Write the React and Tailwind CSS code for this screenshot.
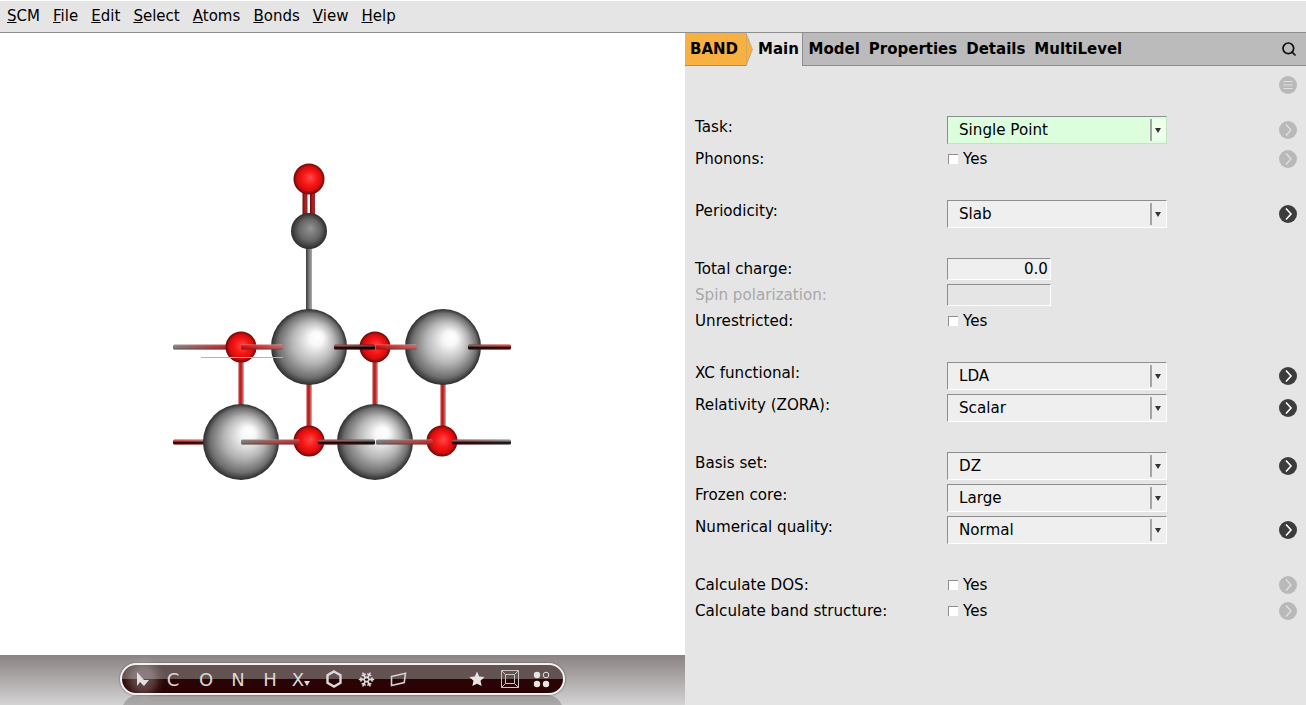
import { Search, Snowflake } from 'lucide-react';

const menus = ['SCM', 'File', 'Edit', 'Select', 'Atoms', 'Bonds', 'View', 'Help'];
const tabs = ['Model', 'Properties', 'Details', 'MultiLevel'];

function MoreBtn({ dark, menu }) {
  return (
    <div className={`w-[18px] h-[18px] rounded-full flex items-center justify-center ${dark ? 'bg-[#3c3c3c]' : 'bg-[#b9b9b9]'}`}>
      <svg width="18" height="18" viewBox="0 0 18 18" fill="none" stroke={dark ? '#fff' : '#e2e2e2'} strokeWidth={dark ? 1.6 : 1.2}>
        {menu ? <path d="M4.5 5.5h9M4.5 9h9M4.5 12.5h9" /> : <path d="M7 3.5 12 9l-5 5.5" />}
      </svg>
    </div>
  );
}

function Row({ label, disabled, tall, more, children }) {
  return (
    <div className={`flex items-center text-[15.15px] ${tall ? 'h-8' : 'h-[26px]'}`}>
      <div className={`w-[262px] pl-[10px] ${tall ? 'pb-[5px]' : ''} ${disabled ? 'text-[#a8a8a8]' : ''}`}>{label}</div>
      <div className="flex-1">{children}</div>
      <div className="w-[18px] mr-[9px]">{more && <MoreBtn dark={more === 'dark'} />}</div>
    </div>
  );
}

function Select({ value, green }) {
  return (
    <div className={`w-[220px] h-7 flex items-center border-t border-l border-[#8e8e8e] border-b border-r ${green ? 'bg-[#dcfedc] border-b-[#c2e4c2] border-r-[#c2e4c2]' : 'bg-[#efefef] border-b-white border-r-white'}`}>
      <div className="flex-1 pl-[11px] pt-[1px]">{value}</div>
      <div className={`w-4 h-[22px] flex items-center justify-center pr-[3px] border-l-2 border-[#a4a4a4] ${green ? 'bg-[#eeffee]' : ''}`}>
        <div className="w-0 h-0 border-l-[3.5px] border-r-[3.5px] border-t-[5px] border-l-transparent border-r-transparent border-t-[#333] mt-[1px]" />
      </div>
    </div>
  );
}

function Check() {
  return (
    <div className="flex items-center gap-[5px] pl-[1px]">
      <div className="w-[10px] h-[10px] bg-white border-t border-l border-[#8e8e8e]" />
      <span>Yes</span>
    </div>
  );
}

function Input({ value, muted }) {
  return (
    <div className={`w-[104px] h-[22px] border-t border-l border-[#8e8e8e] border-b border-r border-b-white border-r-white text-right pr-[2px] leading-[20px] ${muted ? '' : 'bg-[#efefef]'}`}>
      {value}
    </div>
  );
}

function HBond({ x1, x2, y, from, to, id, dark }) {
  return (
    <g>
      <defs>
        <linearGradient id={id} x1="0" x2="1" y1="0" y2="0">
          <stop offset="0" stopColor={from} />
          <stop offset="1" stopColor={to} />
        </linearGradient>
      </defs>
      <rect x={x1} y={y - 2.5} width={x2 - x1} height={5} rx="1.5" fill={`url(#${id})`} />
      <rect x={x1} y={y - 2.5} width={x2 - x1} height={5} rx="1.5" fill={dark ? 'url(#bondShadeDark)' : 'url(#bondShade)'} />
    </g>
  );
}

function VBond({ x, y1, y2, color = 'red', w = 6 }) {
  return <rect x={x - w / 2} y={y1} width={w} height={y2 - y1} fill={color === 'red' ? 'url(#vRed)' : color === 'grey' ? 'url(#vGrey)' : 'url(#vDeep)'} />;
}

function Molecule() {
  const grey = [[309, 347], [443, 347], [241, 442], [375, 442]];
  const red = [[241, 347], [375, 347], [309, 441], [442, 441]];
  return (
    <svg width="685" height="622" viewBox="0 33 685 622" className="block">
      <defs>
        <radialGradient id="sGrey" cx="0.5" cy="0.5" r="0.5" fx="0.62" fy="0.36">
          <stop offset="0" stopColor="#fff" />
          <stop offset="0.18" stopColor="#f8f8f8" />
          <stop offset="0.55" stopColor="#b6b6b6" />
          <stop offset="0.85" stopColor="#6e6e6e" />
          <stop offset="1" stopColor="#2c2c2c" />
        </radialGradient>
        <radialGradient id="sRed" cx="0.5" cy="0.5" r="0.5" fx="0.55" fy="0.45">
          <stop offset="0" stopColor="#ff4a4a" />
          <stop offset="0.5" stopColor="#f71414" />
          <stop offset="0.78" stopColor="#d40e0e" />
          <stop offset="1" stopColor="#6a0808" />
        </radialGradient>
        <radialGradient id="sDark" cx="0.5" cy="0.5" r="0.5" fx="0.55" fy="0.42">
          <stop offset="0" stopColor="#949494" />
          <stop offset="0.6" stopColor="#666" />
          <stop offset="1" stopColor="#2c2c2c" />
        </radialGradient>
        <linearGradient id="bondShade" x1="0" x2="0" y1="0" y2="1">
          <stop offset="0" stopColor="#fff" stopOpacity="0.35" />
          <stop offset="0.5" stopColor="#000" stopOpacity="0" />
          <stop offset="1" stopColor="#000" stopOpacity="0.35" />
        </linearGradient>
        <linearGradient id="bondShadeDark" x1="0" x2="0" y1="0" y2="1">
          <stop offset="0" stopColor="#fff" stopOpacity="0.1" />
          <stop offset="0.55" stopColor="#000" stopOpacity="0.85" />
          <stop offset="1" stopColor="#000" stopOpacity="0.6" />
        </linearGradient>
        <linearGradient id="vRed" x1="0" x2="1" y1="0" y2="0">
          <stop offset="0" stopColor="#eec0c0" />
          <stop offset="0.3" stopColor="#b01818" />
          <stop offset="0.65" stopColor="#c83030" />
          <stop offset="1" stopColor="#e8b0b0" />
        </linearGradient>
        <linearGradient id="vGrey" x1="0" x2="1" y1="0" y2="0">
          <stop offset="0" stopColor="#3a3a3a" />
          <stop offset="0.5" stopColor="#777" />
          <stop offset="1" stopColor="#aaa" />
        </linearGradient>
        <linearGradient id="vDeep" x1="0" x2="1" y1="0" y2="0">
          <stop offset="0" stopColor="#6a0a0a" />
          <stop offset="0.5" stopColor="#b02020" />
          <stop offset="1" stopColor="#8a3030" />
        </linearGradient>
      </defs>

      <VBond x={309} y1={240} y2={312} color="grey" />
      <VBond x={305} y1={190} y2={216} color="deep" w={5} />
      <VBond x={312.5} y1={190} y2={216} color="deep" w={5} />
      <circle cx="309" cy="179" r="15.5" fill="url(#sRed)" />
      <circle cx="309" cy="231" r="18" fill="url(#sDark)" />

      <VBond x={241} y1={350} y2={408} />
      <VBond x={375} y1={350} y2={408} />
      <VBond x={309} y1={380} y2={432} />
      <VBond x={443} y1={380} y2={432} />

      <HBond id="h1" x1={173} x2={230} y={347} from="#888" to="#c82828" />
      <HBond id="h5" x1={173} x2={216} y={442} from="#ff1010" to="#d06060" dark />
      {grey.map(([cx, cy]) => <circle key={cx} cx={cx} cy={cy} r="38" fill="url(#sGrey)" />)}
      {red.map(([cx, cy]) => <circle key={cx} cx={cx} cy={cy} r="15.5" fill="url(#sRed)" />)}

      <HBond id="h2" x1={241} x2={283} y={347} from="#d81010" to="#c87070" />
      <HBond id="h3" x1={334} x2={375} y={347} from="#a03030" to="#500000" dark />
      <HBond id="h4" x1={376} x2={417} y={347} from="#d81010" to="#c87070" />
      <HBond id="h6" x1={468} x2={511} y={347} from="#603030" to="#ff1010" dark />
      <HBond id="h7" x1={241} x2={300} y={442} from="#808080" to="#c83030" />
      <HBond id="h8" x1={318} x2={375} y={442} from="#b02020" to="#505050" dark />
      <HBond id="h9" x1={376} x2={433} y={442} from="#808080" to="#c83030" />
      <HBond id="h10" x1={452} x2={511} y={442} from="#a02020" to="#808080" dark />
      <line x1="201" x2="283" y1="357.5" y2="357.5" stroke="#5cf05c" strokeWidth="1" />
    </svg>
  );
}

function ToolIcon({ w, children }) {
  return <div style={{ width: w }} className="flex items-center justify-center h-full">{children}</div>;
}

function Toolbar() {
  const letters = [['C', 30], ['O', 36], ['N', 28], ['H', 36]];
  return (
    <div className="h-[50px] bg-gradient-to-b from-[#8b8383] to-[#d4d4d4] flex justify-center relative overflow-hidden">
      <div className="absolute top-[40px] left-[122px] w-[441px] h-5 rounded-t-[16px] bg-gradient-to-b from-[#a09c9c] to-[#b6b6b6]" />
      <div className="relative mt-2 w-[445px] h-[32px] rounded-full border-2 border-[#f2f0f0] bg-gradient-to-b from-[#635252] from-50% to-[#2a0404] to-50% flex items-center pl-[6px] pr-[7px] text-[#dcd8d8] text-[18px] font-['DejaVu_Sans',sans-serif] shadow-[0_0_2px_#444]">
        <ToolIcon w={30}>
          <div className="relative">
            <div className="absolute -inset-[8px] rounded-full bg-white/25 blur-[4px]" />
            <svg width="14" height="16" viewBox="0 0 14 16" className="relative"><path d="M1 1v14l3-4 4 4 5-6H8z" fill="#e4e0e0" /></svg>
          </div>
        </ToolIcon>
        {letters.map(([l, w]) => <ToolIcon key={l} w={w}>{l}</ToolIcon>)}
        <ToolIcon w={30}>
          <span>X</span>
          <div className="w-0 h-0 border-l-[3.5px] border-r-[3.5px] border-t-[5px] border-l-transparent border-r-transparent border-t-[#dcd8d8] mt-2 mr-[4px]" />
        </ToolIcon>
        <ToolIcon w={32}>
          <svg width="16" height="18" viewBox="0 0 16 18" fill="none" stroke="#dcd8d8" strokeWidth="2.4"><path d="M8 1.5 14.5 5.2v7.6L8 16.5 1.5 12.8V5.2z" /></svg>
        </ToolIcon>
        <ToolIcon w={32}><Snowflake size={17} strokeWidth={2.2} /></ToolIcon>
        <ToolIcon w={32}>
          <svg width="17" height="15" viewBox="0 0 17 15" fill="none" stroke="#d4d0d0" strokeWidth="1.6"><path d="M1.5 4.5 15.5 1.2 14.2 10.5 1.5 13.5z" /></svg>
        </ToolIcon>
        <div className="flex-1" />
        <ToolIcon w={32}>
          <svg width="16" height="16" viewBox="0 0 16 16"><path d="M8 .5l2.2 5.1 5.4.5-4.1 3.6 1.2 5.4L8 12.8l-4.7 2.3 1.2-5.4L.4 6.1l5.4-.5z" fill="#e8e4e4" /></svg>
        </ToolIcon>
        <ToolIcon w={33}>
          <svg width="18" height="18" viewBox="0 0 18 18" fill="none" stroke="#c8c4c4" strokeWidth="1"><path d="M.5.5h17v17H.5zM4.5 4.5h9v9h-9zM.5.5l4 4M17.5.5l-4 4M.5 17.5l4-4M17.5 17.5l-4-4" /></svg>
        </ToolIcon>
        <ToolIcon w={30}>
          <svg width="17" height="17" viewBox="0 0 17 17">
            <circle cx="4" cy="4" r="3.2" fill="#e8e4e4" />
            <circle cx="13" cy="4" r="2.8" fill="none" stroke="#e8e4e4" />
            <circle cx="4" cy="13" r="3.2" fill="#e8e4e4" />
            <circle cx="13" cy="13" r="3.2" fill="#e8e4e4" />
          </svg>
        </ToolIcon>
      </div>
    </div>
  );
}

export default function App() {
  return (
    <div className="h-screen w-full overflow-hidden flex flex-col bg-white text-[15px] text-black font-['DejaVu_Sans',sans-serif]">
      <div className="h-[33px] shrink-0 bg-[#e5e5e5] border-t border-white border-b border-b-[#8e8e8e] flex items-center pl-[7px] gap-[13.1px]">
        {menus.map((m) => (
          <span key={m}><span className="underline">{m[0]}</span>{m.slice(1)}</span>
        ))}
      </div>

      <div className="flex-1 flex min-h-0">
        <div className="w-[685px] flex flex-col">
          <div className="flex-1"><Molecule /></div>
          <Toolbar />
        </div>

        <div className="flex-1 bg-[#e5e5e5] flex flex-col">
          <div className="h-[33px] shrink-0 bg-[#bbbbbb] border-b border-[#8e8e8e] flex items-center font-bold">
            <div className="h-full w-[61px] bg-[#f8b040] pl-[5px] flex items-center">BAND</div>
            <div className="h-[33px] self-start flex bg-[#e5e5e5] border-r border-[#8e8e8e] w-[57px]">
              <svg width="7" height="33" viewBox="0 0 7 33" className="shrink-0">
                <path d="M0 0 6.5 16.5 0 33z" fill="#f8b040" stroke="#9a9a9a" strokeWidth="0.6" />
              </svg>
              <div className="flex items-center pl-[5px]">Main</div>
            </div>
            <div className="flex gap-[9px] pl-[5.5px]">
              {tabs.map((t) => <span key={t}>{t}</span>)}
            </div>
            <div className="flex-1" />
            <Search size={16} strokeWidth={2.6} className="mr-[9px] text-[#111]" />
          </div>

          <div className="flex justify-end pt-[10px] pr-[9px] h-[48px] shrink-0"><MoreBtn menu /></div>

          <div className="flex flex-col gap-[26px]">
            <div>
              <Row tall label="Task:" more="light"><Select value="Single Point" green /></Row>
              <Row label="Phonons:" more="light"><Check /></Row>
            </div>
            <Row tall label="Periodicity:" more="dark"><Select value="Slab" /></Row>
            <div>
              <Row label="Total charge:"><Input value="0.0" /></Row>
              <Row label="Spin polarization:" disabled><Input muted /></Row>
              <Row label="Unrestricted:"><Check /></Row>
            </div>
            <div>
              <Row tall label="XC functional:" more="dark"><Select value="LDA" /></Row>
              <Row tall label="Relativity (ZORA):" more="dark"><Select value="Scalar" /></Row>
            </div>
            <div>
              <Row tall label="Basis set:" more="dark"><Select value="DZ" /></Row>
              <Row tall label="Frozen core:"><Select value="Large" /></Row>
              <Row tall label="Numerical quality:" more="dark"><Select value="Normal" /></Row>
            </div>
            <div>
              <Row label="Calculate DOS:" more="light"><Check /></Row>
              <Row label="Calculate band structure:" more="light"><Check /></Row>
            </div>
          </div>
        </div>
      </div>
    </div>
  );
}
